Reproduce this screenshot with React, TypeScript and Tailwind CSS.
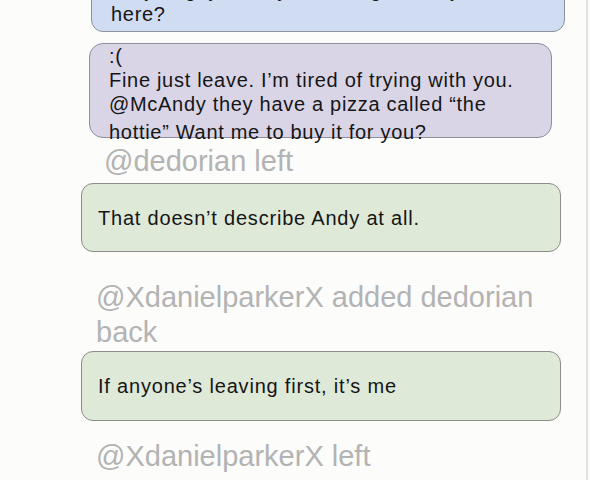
const font = { fontFamily: '"Liberation Sans", Arial, sans-serif' }

function Notice({ text, className }: { text: string; className: string }) {
  return <p className={`text-[29px] leading-[35px] text-[#b3b3b3] ${className}`}>{text}</p>
}

export default function App() {
  return (
    <div className="h-[480px] w-[590px] overflow-hidden bg-[#fcfcfb]" style={font}>
      <div className="flex h-full w-[588px] flex-col border-r-2 border-[#e2e2e2]">
        <div className="ml-[91px] -mt-[28px] h-[60px] w-[474px] shrink-0 overflow-hidden rounded-[12px] border-[1.5px] border-[#8e929c] bg-[#cfdcf2] pl-[19px] pt-[5px] text-[20px] leading-[24px] tracking-[0.7px] text-[#151515]">
          <p>Do you guys really want to go? Are you bored</p>
          <p>here?</p>
        </div>

        <div className="ml-[89px] mt-[11px] h-[95px] w-[463px] shrink-0 rounded-[14px] border-[1.5px] border-[#8e8e9c] bg-[#d9d5e7] pl-[19px] text-[20px] leading-[24px] tracking-[0.7px] text-[#151515]">
          <p>:(</p>
          <p>Fine just leave. I’m tired of trying with you.</p>
          <p>@McAndy they have a pizza called “the</p>
          <p className="mt-[4px]">hottie” Want me to buy it for you?</p>
        </div>

        <Notice text="@dedorian left" className="ml-[104px] mt-[6px]" />

        <div className="ml-[81px] mt-[4px] flex h-[69px] w-[480px] shrink-0 items-center rounded-[12px] border-[1.5px] border-[#8a8d88] bg-[#dfe9d8] px-[16px] text-[20px] tracking-[0.8px] text-[#151515]">
          That doesn’t describe Andy at all.
        </div>

        <Notice
          text="@XdanielparkerX added dedorian back"
          className="ml-[96px] mt-[28px] w-[460px]"
        />

        <div className="ml-[81px] mt-[1px] flex h-[70px] w-[480px] shrink-0 items-center rounded-[12px] border-[1.5px] border-[#8a8d88] bg-[#dfe9d8] px-[16px] text-[20px] tracking-[0.8px] text-[#151515]">
          If anyone’s leaving first, it’s me
        </div>

        <Notice text="@XdanielparkerX left" className="ml-[96px] mt-[18px]" />
      </div>
    </div>
  )
}
